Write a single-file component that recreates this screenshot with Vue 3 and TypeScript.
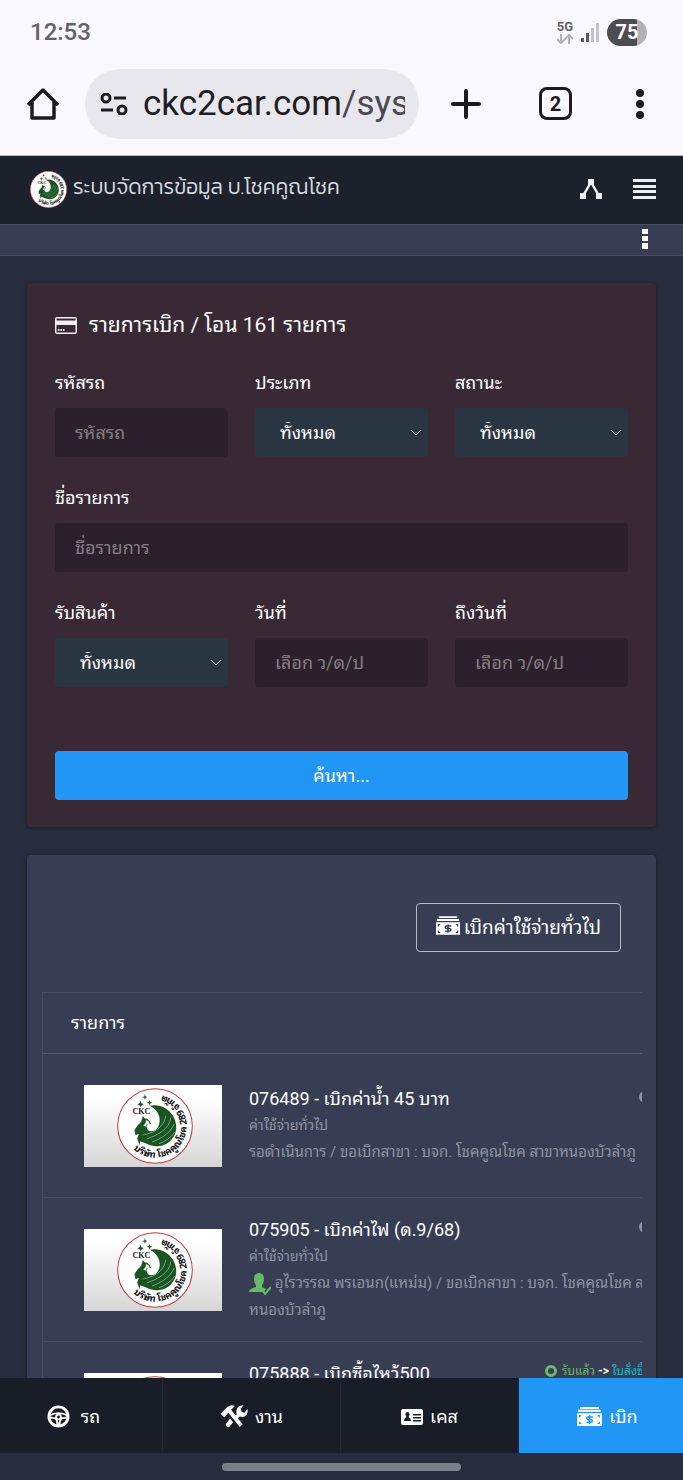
<script setup lang="ts">
import { ref } from 'vue'

interface Item {
  id: string
  title: string
  category?: string
  detail: string[]
  approved?: boolean
  received?: boolean
  tall?: boolean
}

const plate = ref('')
const itemName = ref('')
const dateFrom = ref('')
const dateTo = ref('')

const items: Item[] = [
  {
    id: '076489',
    title: 'เบิกค่าน้ำ 45 บาท',
    category: 'ค่าใช้จ่ายทั่วไป',
    detail: ['รอดำเนินการ / ขอเบิกสาขา : บจก. โชคคูณโชค สาขาหนองบัวลำภู'],
  },
  {
    id: '075905',
    title: 'เบิกค่าไฟ (ด.9/68)',
    category: 'ค่าใช้จ่ายทั่วไป',
    detail: ['อุไรวรรณ พรเอนก(แหม่ม) / ขอเบิกสาขา : บจก. โชคคูณโชค สาขา', 'หนองบัวลำภู'],
    approved: true,
  },
  { id: '075888', title: 'เบิกซื้อไหว้500', detail: [], received: true, tall: true },
]

const tabs = [
  { label: 'รถ', icon: 'wheel' },
  { label: 'งาน', icon: 'tools' },
  { label: 'เคส', icon: 'contact' },
  { label: 'เบิก', icon: 'cash' },
]
</script>

<template>
  <svg class="defs" aria-hidden="true">
    <symbol id="logo" viewBox="0 0 226 226">
      <circle cx="113" cy="113" r="111" fill="#fff" stroke="#c23b42" stroke-width="3" />
      <g fill="#2c4a30">
        <path d="M83 18l2 7 7 2-7 2-2 7-2-7-7-2 7-2z" />
        <path d="M70 38l3 7 7 3-7 3-3 7-3-7-7-3 7-3z" />
        <path d="M97 35l2 7 7 2-7 2-2 7-2-7-7-2 7-2z" />
      </g>
      <text x="46" y="77" class="logo-mark">CKC</text>
      <path
        fill="#185522"
        d="M97 53C133 44 174 71 176 113C178 147 151 172 121 173C100 173 85 163 69 158L67 171L60 150L65 137L55 140L52 126L60 113L72 100L77 83L83 91C91 91 99 97 101 108C94 103 88 108 88 116C90 132 110 133 120 119C135 98 126 66 97 53Z"
      />
      <path fill="#fff" d="M86 96q10 1 11 11q-9-2-13 8l-6-4q8-3 8-15z" />
      <path fill="none" stroke="#a9c7ad" stroke-width="2" d="M145 83c-5 34-36 51-68 57M160 88c-5 35-37 51-70 63M170 107c-13 29-37 42-66 54M172 131c-12 17-27 27-48 35" />
      <path id="logo-arc" fill="none" d="M49 182A94 94 0 1 0 136 22" />
      <text class="logo-ring"><textPath href="#logo-arc">บริษัท โชคคูณโชค 289 จำกัด</textPath></text>
    </symbol>
    <symbol id="i-cash" viewBox="0 0 26 20">
      <path fill="currentColor" fill-rule="evenodd" d="M3 0h20v2H3zM1 3h24v2H1zM0 6.500h26V20H0zM2 8.500v3l3-3zM24 8.500h-3l3 3zM2 18h3l-3-3zM24 18v-3l-3 3z" />
      <path fill="none" class="cut" stroke-width="1.600" d="M16.500 10.500h-5c-2 0-2 2.800 0 2.800h3c2 0 2 2.800 0 2.800H9.700M13 8.800v9" />
    </symbol>
    <symbol id="i-wheel" viewBox="0 0 24 24">
      <circle cx="12" cy="12" r="10" fill="none" stroke="currentColor" stroke-width="3" />
      <path fill="none" stroke="currentColor" stroke-width="2" d="M2 11q10-5 20 0M3 13l6 1q2 2 2 7M21 13l-6 1q-2 2-2 7" />
      <circle cx="12" cy="12.500" r="2.500" fill="none" stroke="currentColor" stroke-width="2" />
    </symbol>
    <symbol id="i-tools" viewBox="0 0 28 24">
      <path fill="currentColor" d="M0 9l7-7q4-3 8-1l-4 4 12 15-3 3L8 8l-4 5z" />
      <path fill="currentColor" d="M17 10q-2-6 3-9l4-1-3 4 1 3 3 1 3-4q1 6-3 8-2 1-5 0l-2 2-3-3zM10 14l3 4-4 5q-2 1-3-1-1-1 0-3z" />
    </symbol>
    <symbol id="i-contact" viewBox="0 0 22 16">
      <path fill="currentColor" fill-rule="evenodd" d="M2 0h18q2 0 2 2v12q0 2-2 2H2q-2 0-2-2V2q0-2 2-2zM6.500 3q-2 0-2 2 0 2 1 3-2.500 1-2.500 4h7q0-3-2.500-4 1-1 1-3 0-2-2-2zM12 5v1.500h8V5zM12 8v1.500h8V8zM12 11v1.500h8V11z" />
    </symbol>
  </svg>

  <div class="screen">
    <div class="status-bar">
      <span class="clock">12:53</span>
      <div class="signals">
        <div class="network">
          <span>5G</span>
          <svg width="16" height="10" viewBox="0 0 16 10" fill="none" stroke="#b3b1b8" stroke-width="2"><path d="M4 0v9M0 5l4 4 4-4M12 10V1M8 5l4-4 4 4" /></svg>
        </div>
        <svg width="18" height="19" viewBox="0 0 18 19"><path fill="#58575c" d="M0 15h3v4H0zM5 10h3v9H5z" /><path fill="#c4c2c9" d="M10 5h3v14h-3zM15 0h3v19h-3z" /></svg>
        <span class="battery">75</span>
      </div>
    </div>

    <div class="browser-bar">
      <button class="chrome-btn" aria-label="Home">
        <svg width="32" height="32" viewBox="0 0 32 32" fill="none" stroke="#1b1b20" stroke-width="3.500" stroke-linejoin="round"><path d="M1 17L16 2L31 17M5 14v16h22V14" /></svg>
      </button>
      <div class="address">
        <svg width="28" height="22" viewBox="0 0 28 22" fill="none" stroke="#1b1b20" stroke-width="3"><circle cx="6" cy="5" r="4" /><path d="M14 5h12M1 17h12" /><circle cx="22" cy="17" r="4" /></svg>
        <span class="url">ckc2car.com<span>/sys</span></span>
      </div>
      <button class="chrome-btn" aria-label="New tab">
        <svg width="30" height="30" viewBox="0 0 30 30" stroke="#1b1b20" stroke-width="4" stroke-linecap="round"><path d="M15 2v26M2 15h26" /></svg>
      </button>
      <button class="chrome-btn tabs-btn" aria-label="Tabs"><span>2</span></button>
      <button class="chrome-btn" aria-label="Menu">
        <svg width="8" height="30" viewBox="0 0 8 30" fill="#1b1b20"><circle cx="4" cy="4" r="4" /><circle cx="4" cy="15" r="4" /><circle cx="4" cy="26" r="4" /></svg>
      </button>
    </div>

    <header class="app-header">
      <a href="#" class="brand">
        <svg width="37" height="37"><use href="#logo" /></svg>
        <span>ระบบจัดการข้อมูล บ.โชคคูณโชค</span>
      </a>
      <button class="plain" aria-label="สาขา">
        <svg width="22" height="20" viewBox="0 0 22 20"><path fill="none" stroke="#edf0f2" stroke-width="2.500" d="M11 3L3 17M11 3l8 14" /><path fill="#edf0f2" d="M8 0h6v6H8zM0 14h6v6H0zM16 14h6v6h-6z" /></svg>
      </button>
      <button class="plain" aria-label="เมนู">
        <svg width="23" height="20" viewBox="0 0 23 20" fill="#edf0f2"><path d="M0 0h23v3H0zM0 6h23v3H0zM0 11h23v3H0zM0 17h23v3H0z" /></svg>
      </button>
    </header>
    <div class="sub-bar">
      <button class="plain" aria-label="ตัวเลือก">
        <svg width="6" height="20" viewBox="0 0 6 20" fill="#fff"><path d="M0 0h6v5H0zM0 7h6v5H0zM0 14h6v6H0z" /></svg>
      </button>
    </div>

    <main class="content">
      <form class="card search" @submit.prevent>
        <h1>
          <svg width="22" height="17" viewBox="0 0 22 17"><path fill="#f3eef2" fill-rule="evenodd" d="M2 0h18q2 0 2 2v13q0 2-2 2H2q-2 0-2-2V2q0-2 2-2zM1.500 1.500v2h19v-2zM1.500 8v7.500h19V8zM3 12h1.500v2H3zM5.500 12H7v2H5.500zM8 12h1.500v2H8z" /></svg>
          รายการเบิก / โอน 161 รายการ
        </h1>
        <div class="fields">
          <div class="field">
            <label for="plate">รหัสรถ</label>
            <input id="plate" v-model="plate" type="text" placeholder="รหัสรถ" />
          </div>
          <div class="field">
            <label for="type">ประเภท</label>
            <div class="picker">
              <select id="type"><option>ทั้งหมด</option></select>
              <svg width="12" height="7" viewBox="0 0 12 7"><path d="M1 1l5 5 5-5" /></svg>
            </div>
          </div>
          <div class="field">
            <label for="status">สถานะ</label>
            <div class="picker">
              <select id="status"><option>ทั้งหมด</option></select>
              <svg width="12" height="7" viewBox="0 0 12 7"><path d="M1 1l5 5 5-5" /></svg>
            </div>
          </div>
          <div class="field wide">
            <label for="name">ชื่อรายการ</label>
            <input id="name" v-model="itemName" type="text" placeholder="ชื่อรายการ" />
          </div>
          <div class="field">
            <label for="receive">รับสินค้า</label>
            <div class="picker">
              <select id="receive"><option>ทั้งหมด</option></select>
              <svg width="12" height="7" viewBox="0 0 12 7"><path d="M1 1l5 5 5-5" /></svg>
            </div>
          </div>
          <div class="field">
            <label for="from">วันที่</label>
            <input id="from" v-model="dateFrom" type="text" placeholder="เลือก ว/ด/ป" />
          </div>
          <div class="field">
            <label for="to">ถึงวันที่</label>
            <input id="to" v-model="dateTo" type="text" placeholder="เลือก ว/ด/ป" />
          </div>
        </div>
        <button type="submit" class="submit">ค้นหา...</button>
      </form>

      <section class="card results">
        <div class="actions">
          <button class="outline">
            <svg class="cash-icon" width="24" height="19"><use href="#i-cash" /></svg>
            เบิกค่าใช้จ่ายทั่วไป
          </button>
        </div>
        <div class="table-wrap">
          <table>
            <thead>
              <tr><th scope="col">รายการ</th></tr>
            </thead>
            <tbody>
              <tr v-for="item in items" :key="item.id">
                <td>
                  <div class="item">
                    <div class="thumb"><svg width="76" height="76"><use href="#logo" /></svg></div>
                    <div class="info" :class="{ tall: item.tall }">
                      <div class="heading">
                        <a href="#">{{ item.id }} - {{ item.title }}</a>
                        <span class="state" :class="{ received: item.received }">
                          <svg width="12" height="12" viewBox="0 0 12 12"><circle cx="6" cy="6" r="4.500" fill="none" stroke="currentColor" stroke-width="3" /></svg>
                          <template v-if="item.received"><span class="done">รับแล้ว</span> <b>-&gt;</b> <a href="#">ใบสั่งซื้อ</a></template>
                        </span>
                      </div>
                      <p v-if="item.category" class="category">{{ item.category }}</p>
                      <p v-for="(line, n) in item.detail" :key="n">
                        <svg v-if="item.approved && n === 0" width="22" height="22" viewBox="0 0 22 22"><path fill="#66bb6a" d="M10 0q5 0 5 6 0 4-2 6v2l4 2-2 3H0q0-3 7-5v-2q-2-2-2-6 0-6 5-6z" /><path fill="none" stroke="#66bb6a" stroke-width="2" d="M13 17l3 4 6-7" /></svg>
                        {{ line }}
                      </p>
                    </div>
                  </div>
                </td>
              </tr>
            </tbody>
          </table>
        </div>
      </section>
    </main>

    <nav class="tab-bar">
      <a v-for="tab in tabs" :key="tab.icon" href="#" :class="[tab.icon, { active: tab.icon === 'cash' }]">
        <svg><use :href="`#i-${tab.icon}`" /></svg>
        <span>{{ tab.label }}</span>
      </a>
    </nav>
    <div class="gesture"><span></span></div>
  </div>
</template>

<style>
body {
  background: #272d3c;
}
</style>

<style scoped>
.defs {
  position: absolute;
  width: 0;
  height: 0;
}
.logo-mark {
  font: bold 24px 'Liberation Serif', serif;
  fill: #18221a;
}
.logo-ring {
  font: bold 28px 'Noto Sans Thai Looped', Loma, sans-serif;
  fill: #111;
}
.screen {
  height: 100vh;
  display: flex;
  flex-direction: column;
  overflow: hidden;
  background: #272d3c;
  color: #fff;
  font-family: Roboto, 'Noto Sans Thai Looped', Loma, sans-serif;
  font-size: 18px;
}
.screen * {
  box-sizing: border-box;
}
svg {
  flex: none;
}
button,
input,
select {
  font: inherit;
  color: inherit;
  margin: 0;
}
a {
  color: inherit;
  text-decoration: none;
}
.status-bar {
  flex: none;
  height: 64px;
  padding: 0 36px 0 30px;
  display: flex;
  align-items: center;
  justify-content: space-between;
  background: #faf8ff;
  color: #646268;
}
.clock {
  font-size: 24px;
  font-weight: 500;
}
.signals {
  display: flex;
  align-items: center;
  gap: 8px;
}
.network {
  display: flex;
  flex-direction: column;
  align-items: center;
  gap: 1px;
  font-size: 13px;
  line-height: 12px;
  font-weight: 700;
}
.battery {
  width: 40px;
  height: 27px;
  border-radius: 14px;
  background: linear-gradient(90deg, #4d4c50 76%, #b3b1b7 76%);
  color: #fff;
  font-size: 20px;
  line-height: 27px;
  font-weight: 700;
  text-align: center;
}
.browser-bar {
  flex: none;
  height: 92px;
  padding: 4px 39px 16px 27px;
  display: flex;
  align-items: center;
  background: #faf8ff;
  border-bottom: 1px solid #b9bcc4;
}
.chrome-btn {
  flex: none;
  padding: 0;
  border: 0;
  background: none;
  display: flex;
  color: #1b1b20;
}
.address {
  flex: 1;
  min-width: 0;
  height: 70px;
  margin: 0 32px 0 26px;
  padding: 0 14px 0 15px;
  border-radius: 35px;
  background: #e8e7ed;
  display: flex;
  align-items: center;
  gap: 15px;
}
.url {
  flex: 1;
  overflow: hidden;
  white-space: nowrap;
  font-size: 35px;
  line-height: 48px;
  color: #1e1d23;
}
.url span {
  color: #4a4950;
}
.tabs-btn {
  width: 33px;
  height: 33px;
  margin: 0 64px 0 58px;
  align-items: center;
  justify-content: center;
  border: 3px solid #1b1b20;
  border-radius: 8px;
  font-size: 20px;
  font-weight: 700;
}
.app-header {
  flex: none;
  height: 68px;
  padding: 0 27px 2px 30px;
  display: flex;
  align-items: center;
  gap: 31px;
  background: #1d212b;
}
.brand {
  flex: 1;
  display: flex;
  align-items: center;
  gap: 6px;
  font-family: Kanit, 'Noto Sans Thai', sans-serif;
  font-size: 21px;
  font-weight: 300;
  line-height: 28px;
  white-space: nowrap;
  color: #d9dce1;
}
.brand span {
  padding-bottom: 4px;
}
.plain {
  padding: 0;
  border: 0;
  background: none;
  display: flex;
}
.sub-bar {
  flex: none;
  height: 32px;
  padding: 0 35px 2px 0;
  display: flex;
  align-items: center;
  justify-content: flex-end;
  background: #373e53;
  border-top: 1px solid #474e61;
  border-bottom: 1px solid #4a5063;
}
.content {
  flex: 1;
  min-height: 0;
  overflow: hidden;
  padding: 27px 27px 0;
}
.card {
  border-radius: 4px;
  box-shadow: 0 1px 4px rgba(0, 0, 0, 0.4);
}
.search {
  padding: 28px 28px 27px;
  background: #392935;
}
h1 {
  margin: 0 0 30px;
  display: flex;
  align-items: center;
  gap: 12px;
  font-size: 21px;
  line-height: 28px;
  font-weight: 400;
}
.fields {
  display: grid;
  grid-template-columns: repeat(3, 1fr);
  gap: 27px;
}
.wide {
  grid-column: 1 / -1;
}
.field label {
  display: block;
  margin-bottom: 12px;
  line-height: 27px;
}
.field input,
.field select {
  display: block;
  width: 100%;
  height: 49px;
  padding: 0 20px;
  border: 0;
  border-radius: 4px;
  background: #2c212a;
}
.field input::placeholder {
  color: #857c84;
  opacity: 1;
}
.field select {
  appearance: none;
  padding: 0 25px;
  background: #2a3542;
}
.picker {
  display: grid;
  align-items: center;
}
.picker > * {
  grid-area: 1 / 1;
}
.picker svg {
  justify-self: end;
  margin-right: 6px;
  fill: none;
  stroke: #e6eaee;
  pointer-events: none;
}
.submit {
  width: 100%;
  height: 49px;
  margin-top: 64px;
  padding: 0 0 4px;
  border: 0;
  border-radius: 4px;
  background: #2196f5;
}
.results {
  margin-top: 28px;
  padding: 48px 14px 28px 15px;
  background: #373e53;
}
.actions {
  display: flex;
  justify-content: flex-end;
  padding-right: 21px;
  margin-bottom: 40px;
}
.outline {
  height: 49px;
  padding: 0 19px 4px;
  border: 1px solid #b6bac4;
  border-radius: 4px;
  background: none;
  display: flex;
  align-items: center;
  gap: 4px;
  font-size: 19px;
  white-space: nowrap;
}
.cash-icon {
  --hole: #373e53;
}
.cut {
  stroke: var(--hole);
}
.table-wrap {
  overflow: hidden;
}
table {
  width: calc(100% + 38px);
  table-layout: fixed;
  border-collapse: collapse;
  border: 1px solid #474e61;
}
th {
  height: 61px;
  padding: 0 28px 4px;
  border-bottom: 1px solid #525a6c;
  text-align: left;
  font-weight: 400;
}
td {
  height: 144px;
  padding: 0 28px 0 41px;
  border-bottom: 1px solid #444b5f;
}
.item {
  display: flex;
  align-items: center;
  gap: 27px;
}
.thumb {
  flex: none;
  width: 138px;
  height: 82px;
  padding-left: 4px;
  display: flex;
  align-items: center;
  justify-content: center;
  background: linear-gradient(#fff 15%, #d6d6d6);
}
.info {
  flex: 1;
  min-width: 0;
  font-size: 15px;
  line-height: 27px;
  white-space: nowrap;
  color: #8e94a2;
}
.tall {
  min-height: 108px;
}
.heading {
  display: flex;
  justify-content: space-between;
  height: 27px;
  font-size: 18px;
  color: #fff;
}
.info p {
  height: 27px;
  margin: 0;
}
.info .category {
  font-size: 14px;
}
.info p svg {
  vertical-align: middle;
}
.state {
  font-size: 12px;
  line-height: 22px;
  color: #8e94a2;
}
.state svg {
  vertical-align: middle;
}
.received svg {
  margin-right: 5px;
}
.received,
.done {
  color: #66bb6a;
}
.state b {
  color: #fff;
}
.state a {
  color: #26b5d0;
}
.tab-bar {
  flex: none;
  height: 75px;
  margin: 0 -14px 0 -15px;
  display: grid;
  grid-template-columns: repeat(4, 1fr);
  background: #191d27;
}
.tab-bar a {
  display: flex;
  align-items: center;
  justify-content: center;
  gap: 7px;
  padding-top: 2px;
  border-right: 1px solid #232732;
}
.tab-bar span {
  padding-bottom: 3px;
}
.tab-bar svg {
  width: 25px;
  height: 19px;
}
.tab-bar .wheel {
  gap: 11px;
}
.tab-bar .wheel svg {
  width: 23px;
  height: 23px;
}
.tab-bar .tools svg {
  width: 28px;
  height: 23px;
}
.tab-bar .contact svg {
  width: 22px;
  height: 16px;
}
.tab-bar .active {
  --hole: #2196f5;
  background: #2196f5;
  border-color: #2196f5;
}
.gesture {
  flex: none;
  height: 27px;
  display: flex;
  align-items: center;
  justify-content: center;
}
.gesture span {
  width: 35%;
  height: 8px;
  border-radius: 4px;
  background: #7b7f8a;
}
</style>
